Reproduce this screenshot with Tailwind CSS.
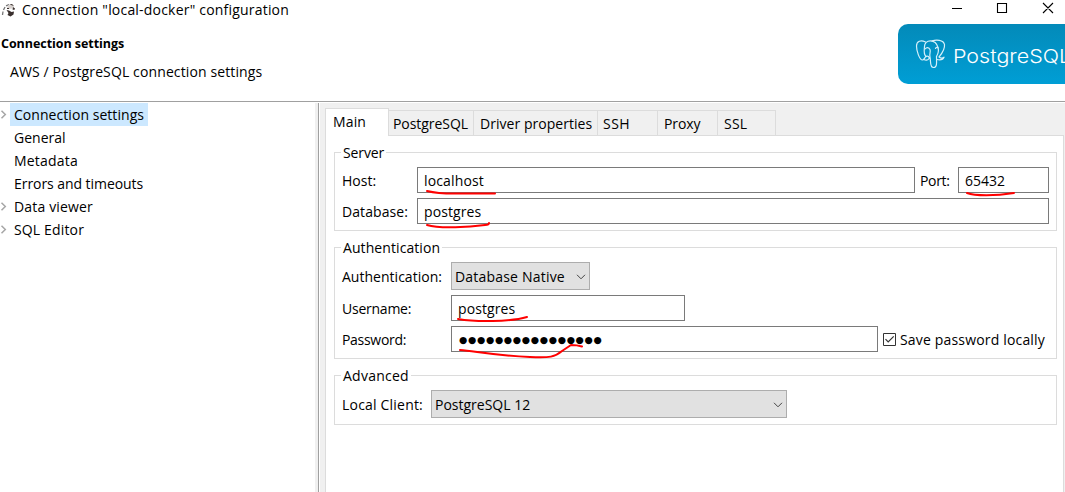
<!DOCTYPE html>
<html lang="en">
<head>
<meta charset="utf-8">
<title>Connection "local-docker" configuration</title>
<script src="https://cdn.jsdelivr.net/npm/@tailwindcss/browser@4"></script>
</head>
<body class="relative flex h-[492px] w-[1065px] flex-col overflow-hidden bg-white font-['Open_Sans',sans-serif] text-[14px] leading-[20px] whitespace-nowrap text-black">
<header class="relative h-[102px] shrink-0 border-b border-[#a0a0a0]">
  <div class="flex h-[19px] items-center">
    <svg class="ml-[1px] h-[16px] w-[15px]" viewBox="0 0 15 16" fill="none">
      <path d="M1.500 13L2 9.500M2.500 8L4 5M5 3.800l3-1.300" stroke="#777" stroke-width="1.300"/>
      <path d="M8 3C10 2 12.500 3 13 4.500L11 6.500L7 7L6 5Z" fill="#d8d2cf"/>
      <path d="M8.500 2.500L11 2L13 4M12 5L14 6.500L13.300 8L11.500 7.500ZM5.500 8L8 8.500L10.500 10L13 9.500L12.500 12.500L9.500 14.500L6.500 13L7.500 11Z" fill="#3a302e"/>
      <path d="M6 6.500h2" stroke="#3a302e"/>
    </svg>
    <span class="ml-[6px] tracking-[0.2px]">Connection "local-docker" configuration</span>
  </div>
  <div class="mt-[15px] ml-[1px] flex"><span class="text-[12.500px] font-bold tracking-[-0.050px]">Connection settings</span></div>
  <div class="mt-[8px] ml-[10px] flex"><span class="tracking-[0.120px]">AWS / PostgreSQL connection settings</span></div>
  <svg class="absolute top-[2px] right-[8px] h-[12px] w-[106px]" viewBox="0 0 106 12" fill="none" stroke="#000">
    <path d="M1 6.500h10M46.500 1.500h9v9h-9zM92 1l10 10M102 1l-10 10" stroke-width="1.100"/>
  </svg>
  <div class="absolute top-[24px] right-0 flex h-[60px] w-[167px] items-center overflow-hidden rounded-l-[10px] bg-linear-to-b from-[#038ab9] to-[#009ed5] text-white">
    <svg class="ml-[17px] h-[32px] w-[32px] shrink-0" viewBox="0 0 32 32" fill="none" stroke="#d5f0fa" stroke-width="1.200" stroke-linecap="round" stroke-linejoin="round">
      <path d="M10.500 4C6 1.800 1.500 3 1.500 8C1.500 13 4.500 22 7.500 22C9 22 9.500 19.500 11 18.500"/>
      <path d="M11 18.500C8 15.500 9.500 11 9.500 8.500C9.500 5 12 2.800 15.500 2.800C19.500 2.800 22 6 23 9.500C24 13 23 16 21.500 18.500"/>
      <path d="M17 2.800C21 1.500 28.500 1.500 29.500 6.500C30 10.500 26.500 16 24 19C26 20.500 28 20 29 19.200C28 22 24.500 22 22 21.500"/>
      <path d="M11 18.500C13 17.500 14.500 19 14 20.500C13 22.500 10.500 22.500 9 21.500M15 19.500C16 23 14.500 29.500 18.500 29.500C22.500 29.500 21.500 24 21.500 18.500"/>
      <path d="M10 11C11.500 9 14 9 15 11.500C16 14 14 16 15 19M20.500 10.500C21 9 22.500 9 23.200 10"/>
    </svg>
    <span class="mt-[6px] ml-[5.500px] origin-left scale-x-[1.130] font-['Inter'] text-[19px] font-light">PostgreSQL</span>
  </div>
</header>
<main class="mt-px flex min-h-0 flex-1">
  <nav class="flex w-[315px] shrink-0 flex-col">
    <div class="flex h-[23px] items-center"><svg class="h-[9px] w-[10px]" viewBox="0 0 10 9" fill="none" stroke="#a6a6a6" stroke-width="1.500"><path d="M1.500 .8L5.300 4.500L1.500 8.200"/></svg><span class="flex h-[23px] w-[138px] items-center bg-[#cce8ff] pl-[4px] tracking-[0.050px]">Connection settings</span></div>
    <div class="flex h-[23px] items-center pl-[14px]">General</div>
    <div class="flex h-[23px] items-center pl-[14px] tracking-[0.2px]">Metadata</div>
    <div class="flex h-[23px] items-center pl-[14px] tracking-[-0.060px]">Errors and timeouts</div>
    <div class="flex h-[23px] items-center"><svg class="mr-[4px] h-[9px] w-[10px]" viewBox="0 0 10 9" fill="none" stroke="#a6a6a6" stroke-width="1.500"><path d="M1.500 .8L5.300 4.500L1.500 8.200"/></svg><span class="tracking-[0.160px]">Data viewer</span></div>
    <div class="flex h-[23px] items-center"><svg class="mr-[4px] h-[9px] w-[10px]" viewBox="0 0 10 9" fill="none" stroke="#a6a6a6" stroke-width="1.500"><path d="M1.500 .8L5.300 4.500L1.500 8.200"/></svg><span class="tracking-[0.150px]">SQL Editor</span></div>
  </nav>
  <div class="w-[4px] shrink-0 border-r border-[#a0a0a0] bg-[#f0f0f0]"></div>
  <section class="ml-px flex flex-1 flex-col bg-[#f0f0f0] pt-[5px] pr-px pl-[5px]">
    <div class="z-10 -mb-px flex h-[28px] items-end">
      <div class="h-[28px] w-[64px] border border-b-0 border-[#dcdcdc] bg-white pt-[3px] pl-[7px] tracking-[0.150px]">Main</div>
      <div class="flex h-[26px] w-[85px] items-center border-y border-r border-[#dcdcdc] pt-px pl-[4px] tracking-[-0.060px]">PostgreSQL</div>
      <div class="flex h-[26px] w-[124px] items-center border-y border-r border-[#dcdcdc] pt-px pl-[6px] tracking-[0.040px]">Driver properties</div>
      <div class="flex h-[26px] w-[60px] items-center border-y border-r border-[#dcdcdc] pt-px pl-[5px] tracking-[0.5px]">SSH</div>
      <div class="flex h-[26px] w-[60px] items-center border-y border-r border-[#dcdcdc] pt-px pl-[6px] tracking-[-0.1px]">Proxy</div>
      <div class="flex h-[26px] w-[58px] items-center border-y border-r border-[#dcdcdc] pt-px pl-[6px] tracking-[0.2px]">SSL</div>
    </div>
    <div class="flex flex-1 flex-col border border-b-0 border-[#dcdcdc] bg-white pt-[16px] pr-[6px] pl-[8px]">
      <div class="relative flex h-[79px] shrink-0 flex-col gap-[5px] border border-[#dcdcdc] pt-[14px] pr-[7px] pl-[7px]">
        <span class="absolute -top-[10px] left-[6px] bg-white px-[2px] tracking-[-0.1px]">Server</span>
        <div class="flex h-[26px] items-center">
          <span class="w-[75px] pt-[2px]">Host:</span>
          <span class="flex h-[26px] w-[498px] items-center border border-[#7a7a7a] pt-[2px] pl-[6px] tracking-[0.150px]">localhost</span>
          <span class="ml-[5px] w-[38px] pt-[2px] tracking-[-0.350px]">Port:</span>
          <span class="flex h-[26px] w-[91px] items-center border border-[#7a7a7a] pt-[2px] pl-[6px]">65432</span>
        </div>
        <div class="flex h-[26px] items-center">
          <span class="w-[75px] pt-[2px] tracking-[0.080px]">Database:</span>
          <span class="flex h-[26px] w-[632px] items-center border border-[#7a7a7a] pt-[2px] pl-[6px] tracking-[0.080px]">postgres</span>
        </div>
      </div>
      <div class="relative mt-[16px] flex h-[112px] shrink-0 flex-col gap-[5px] border border-[#dcdcdc] pt-[14px] pr-[7px] pl-[7px]">
        <span class="absolute -top-[10px] left-[6px] bg-white px-[2px] tracking-[0.080px]">Authentication</span>
        <div class="flex h-[28px] items-center">
          <span class="w-[109px] pt-[2px] tracking-[0.020px]">Authentication:</span>
          <span class="flex h-[28px] w-[139px] items-center justify-between border border-[#adadad] bg-[#e1e1e1] pr-[3px] pl-[3px]"><span class="pt-[2px] tracking-[0.2px]">Database Native</span><svg class="mt-px h-[6px] w-[10px]" viewBox="0 0 10 6" fill="none" stroke="#444"><path d="M1 .8L5 4.800L9 .8"/></svg></span>
        </div>
        <div class="flex h-[26px] items-center">
          <span class="w-[109px] pt-[2px] tracking-[-0.240px]">Username:</span>
          <span class="flex h-[26px] w-[234px] items-center border border-[#7a7a7a] pt-[2px] pl-[6px] tracking-[0.080px]">postgres</span>
        </div>
        <div class="flex h-[26px] items-center">
          <span class="w-[109px] pt-[2px] tracking-[-0.3px]">Password:</span>
          <span class="flex h-[26px] w-[427px] items-center border border-[#7a7a7a] pt-px pl-[7px] font-['DejaVu_Sans'] text-[9.500px] tracking-[0.680px]">●●●●●●●●●●●●●●●●</span>
          <svg class="ml-[5px] h-[13px] w-[13px]" viewBox="0 0 13 13" fill="none" stroke="#333"><path d="M.5 .5h12v12H.5z"/><path d="M2.500 6.200L5.200 9L10.700 3.400" stroke-width="1.200"/></svg>
          <span class="ml-[4px] pt-[2px] tracking-[0.170px]">Save password locally</span>
        </div>
      </div>
      <div class="relative mt-[16px] flex h-[50px] shrink-0 border border-[#dcdcdc] pt-[14px] pl-[7px]">
        <span class="absolute -top-[10px] left-[6px] bg-white px-[2px] tracking-[0.250px]">Advanced</span>
        <div class="flex h-[28px] items-center">
          <span class="w-[89px] pt-[2px] tracking-[0.2px]">Local Client:</span>
          <span class="flex h-[28px] w-[356px] items-center justify-between border border-[#adadad] bg-[#e1e1e1] pr-[3px] pl-[3px]"><span class="pt-[2px]">PostgreSQL 12</span><svg class="mt-px h-[6px] w-[10px]" viewBox="0 0 10 6" fill="none" stroke="#444"><path d="M1 .8L5 4.800L9 .8"/></svg></span>
        </div>
      </div>
    </div>
  </section>
</main>
<!-- Hand-drawn underlines over the filled-in fields -->
<svg class="pointer-events-none absolute top-0 left-0 z-20 h-[492px] w-[1065px]" viewBox="0 0 1065 492" fill="none" stroke="#f00" stroke-width="2" stroke-linecap="round" stroke-linejoin="round">
  <path d="M427 191Q439 194 460 193.500L495 193.500"/>
  <path d="M427 225C440 229 470 227 485 225Q489 225 489 223"/>
  <path d="M967 193C975 196 995 196 1014 193"/>
  <path d="M458 319C475 322 510 322 527 317"/>
  <path d="M460 350C475 351 490 355 530 357C550 358 555 357 562 351L571 345Q577 345 582 346.500"/>
</svg>
</body>
</html>
